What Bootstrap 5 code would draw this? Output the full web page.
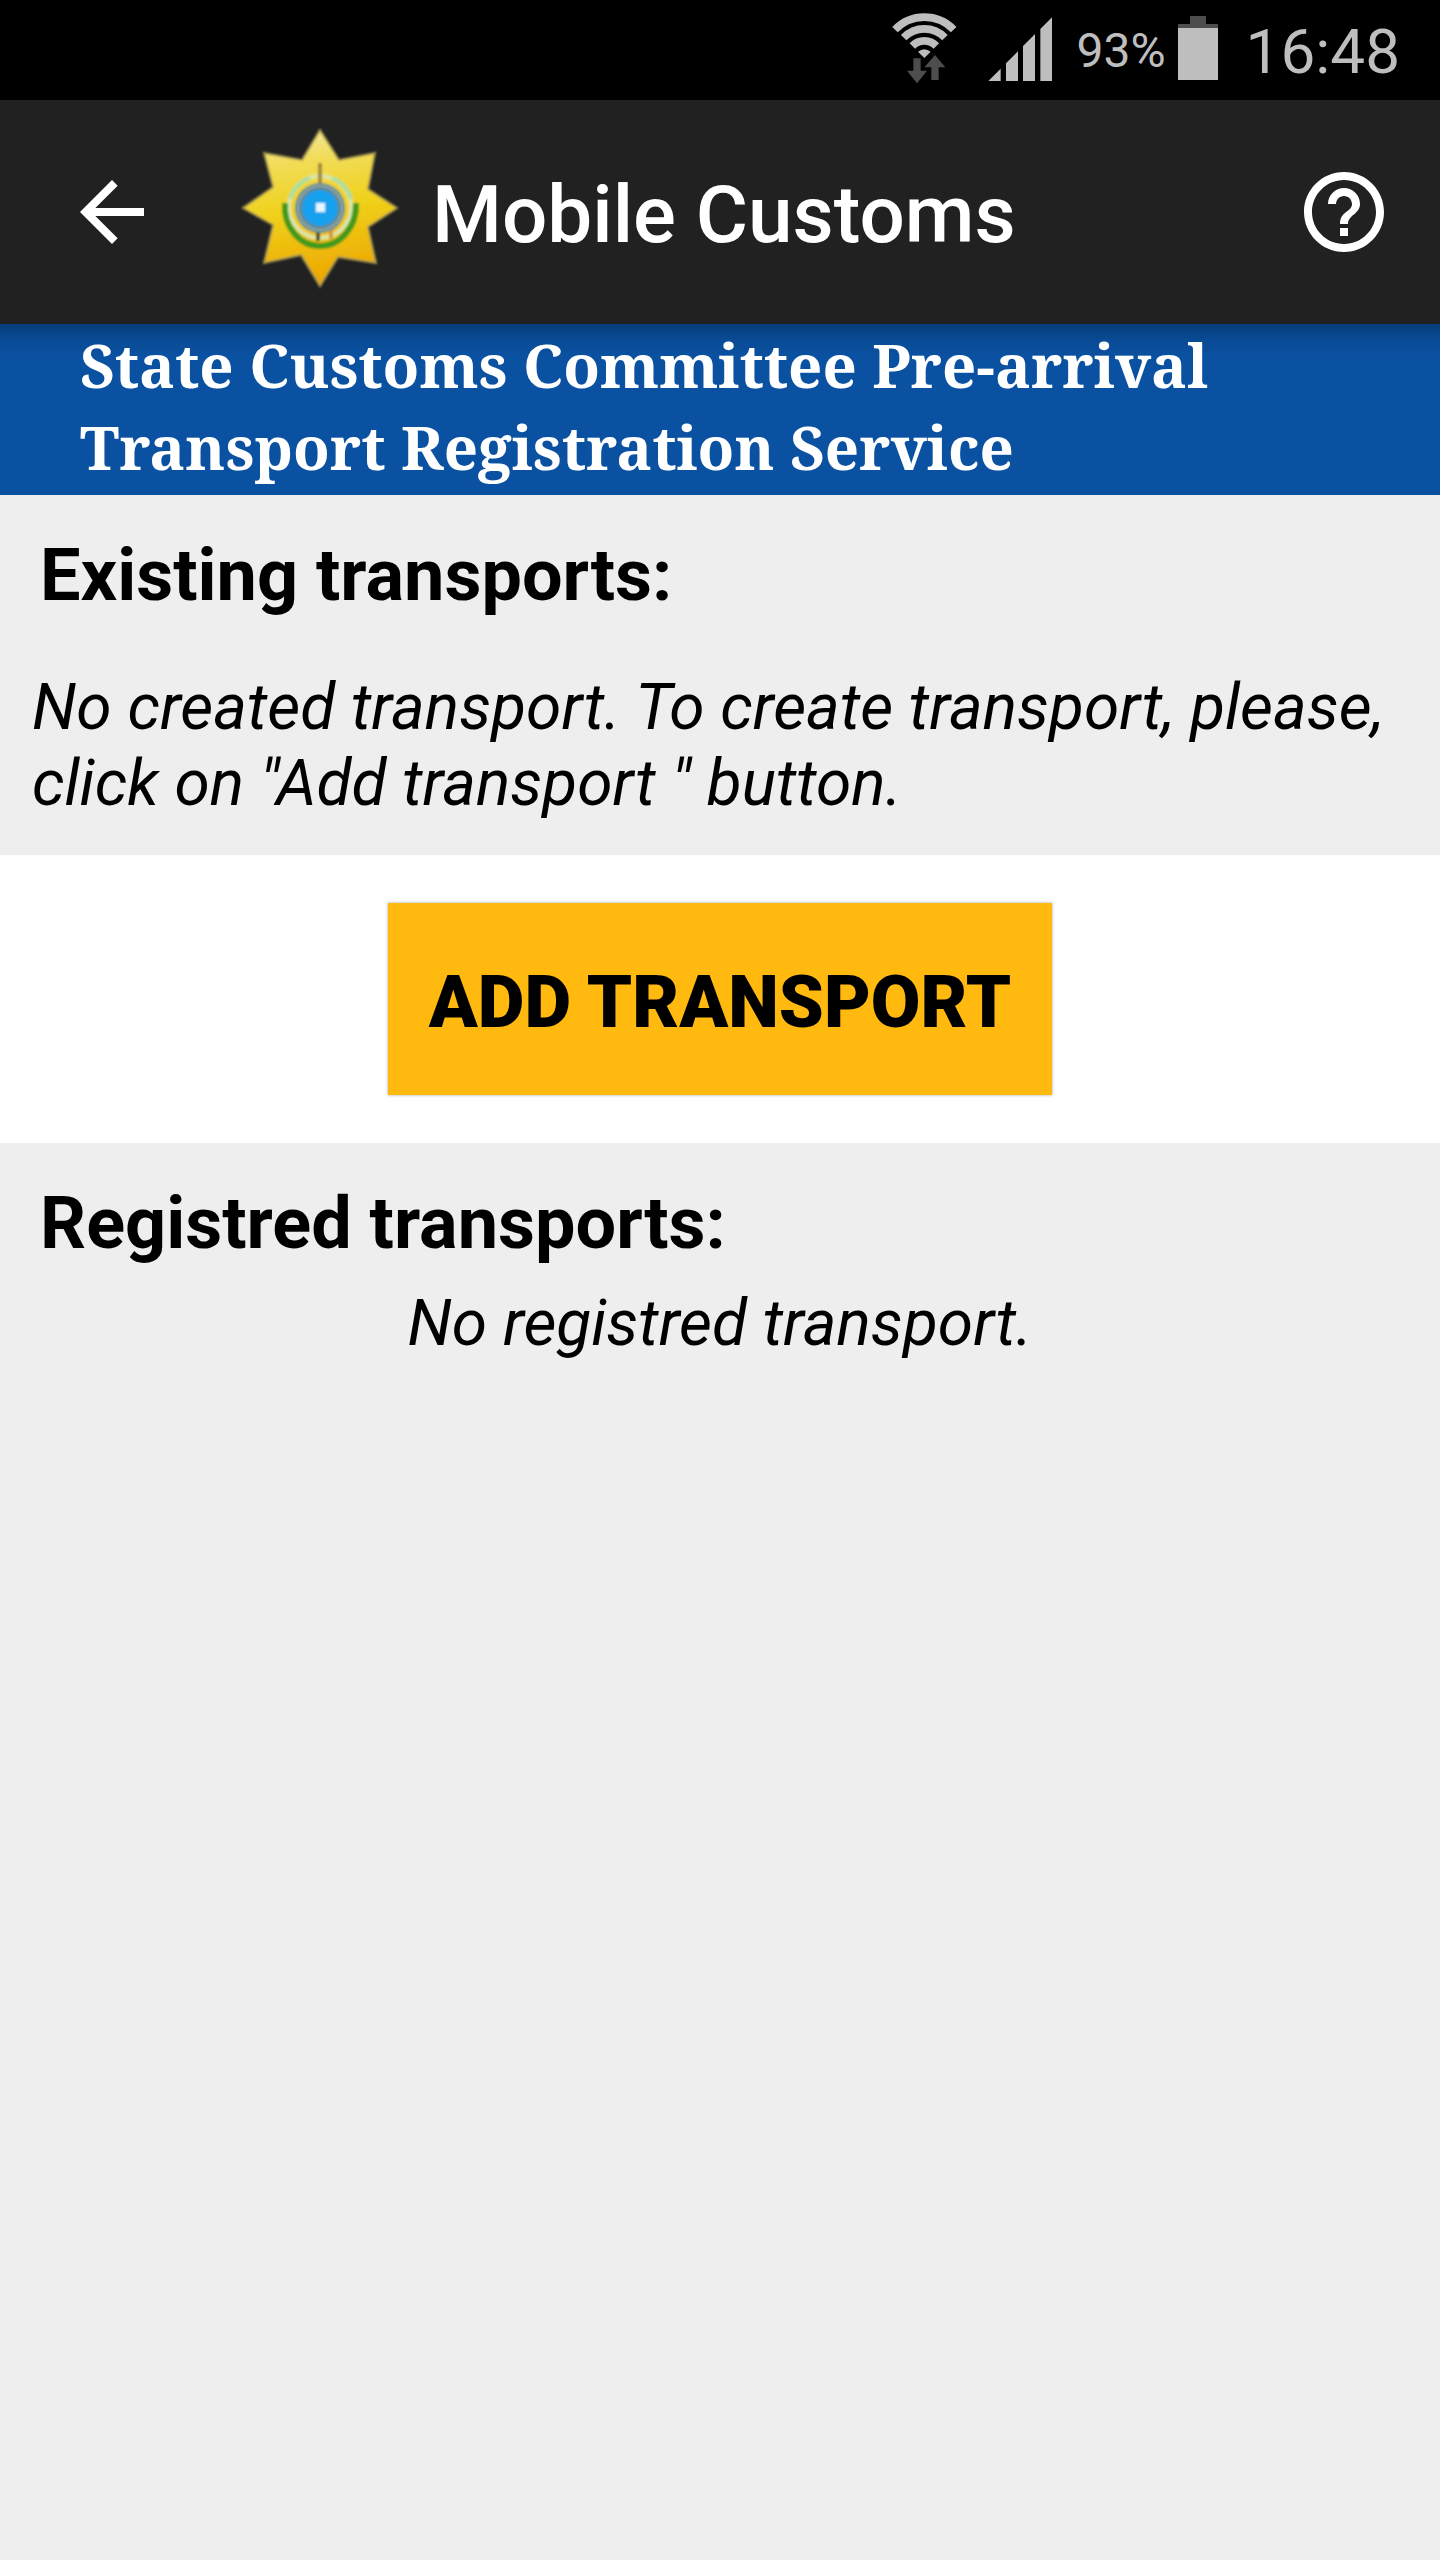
<!DOCTYPE html>
<html lang="en">
<head>
<meta charset="utf-8">
<meta name="viewport" content="width=device-width, initial-scale=1">
<title>Mobile Customs</title>
<link href="https://cdn.jsdelivr.net/npm/bootstrap@5.3.0/dist/css/bootstrap.min.css" rel="stylesheet">
<style>
  body { font-family: Roboto, "Noto Sans", sans-serif; background: #eee; color: #000; }
  svg { display: block; flex: none; }
  .status-bar { height: 100px; padding-right: 40px; background: #000; color: #bebebe; }
  .status-level { font-size: 48px; line-height: 56px; padding: 2px 12px 0 24px; }
  .status-clock { font-size: 62px; line-height: 76px; padding: 4px 0 0 28px; }
  .app-bar { height: 224px; padding: 0 48px 0 64px; background: #212121; color: #fff; }
  .app-title { font-size: 80px; line-height: 96px; font-weight: 500; padding: 6px 0 0 28px; }
  .app-logo { margin-left: 76px; }
  .service-banner {
    padding: 0 80px 7px;
    background: linear-gradient(rgba(0,0,0,.25), rgba(0,0,0,.08) 16px, transparent 32px) #0a51a1;
    color: #fff;
    font: bold 60px/82px "Noto Serif", "DejaVu Serif", serif;
  }
  .section-title { font-size: 72px; line-height: 84px; font-weight: 700; padding: 0 8px; }
  .empty-note { font-size: 64px; line-height: 76px; font-style: italic; }
  .transport-section { padding: 39px 32px 33px; }
  .add-area { padding: 48px 0; }
  .add-btn {
    --bs-btn-bg: #ffb90f; --bs-btn-color: #000; --bs-btn-hover-bg: #f0ab00;
    --bs-btn-font-size: 72px; --bs-btn-line-height: 84px; --bs-btn-font-weight: 900;
    --bs-btn-padding-x: 41px;
    padding-top: 58px; padding-bottom: 50px;
    box-shadow: 0 0 3px rgba(0,0,0,.35);
  }
</style>
</head>
<body>
<div class="status-bar d-flex align-items-center justify-content-end">
  <svg width="68" height="100" viewBox="90 0 204 300" aria-label="Wi-Fi" role="img">
    <g fill="none" stroke="#bebebe" stroke-width="23">
      <path d="M105 89A122 122 0 0 1 281 89"/>
      <path d="M131 113A86 86 0 0 1 255 113"/>
      <path d="M157 138A50 50 0 0 1 229 138"/>
    </g>
    <path fill="#bebebe" d="M193 174L174 155Q193 140 212 155Z"/>
    <path fill="#4d4d4d" d="M160 175H182V212H201L171 250L141 212H160ZM214 240V202H193L225 165L256 202H236V240Z"/>
  </svg>
  <svg class="ms-4" width="70" height="100" viewBox="366 0 210 300" aria-label="Signal" role="img">
    <path fill="#bebebe" d="M385 243L422 206V243ZM438 243V190L474 154V243ZM489 243V138L525 102V243ZM541 243V87L576 52V243Z"/>
  </svg>
  <span class="status-level">93%</span>
  <svg width="40" height="100" viewBox="111 0 120 300" aria-label="Battery" role="img">
    <path fill="#4d4d4d" d="M147 48H195V72H231V84H111V72H147Z"/><path fill="#bebebe" d="M111 84H231V240H111Z"/>
  </svg>
  <span class="status-clock">16:48</span>
</div>
<header class="app-bar d-flex align-items-center">
  <a href="#" aria-label="Back"><svg width="96" height="96" viewBox="0 0 24 24" fill="#fff"><path d="M20 11H7.83l5.59-5.59L12 4l-8 8 8 8 1.41-1.41L7.83 13H20v-2z"/></svg></a>
  <svg class="app-logo" width="168" height="168" viewBox="6 13 168 168" aria-hidden="true">
    <defs>
      <linearGradient id="gold" x1="0" y1="0" x2="0.15" y2="1">
        <stop offset="0" stop-color="#f3e9b0"/><stop offset=".25" stop-color="#f2dc58"/>
        <stop offset=".55" stop-color="#f0d21c"/><stop offset="1" stop-color="#eda900"/>
      </linearGradient>
      <filter id="soften" x="-10%" y="-10%" width="120%" height="120%"><feGaussianBlur stdDeviation="1"/></filter>
    </defs>
    <g filter="url(#soften)">
      <path fill="url(#gold)" stroke="#a5974d" stroke-width="2" d="M90 15L109 45L145 38L138 74L167 93L138 112L146 148L108 142L90 171L71 140L34 148L43 110L13 93L43 72L34 38L72 45Z"/>
      <circle cx="90" cy="92" r="31" fill="none" stroke="#dbe6a8" stroke-width="4"/>
      <path d="M60 84A31 32 0 0 1 80 63M102 63A31 32 0 0 1 121 84" fill="none" stroke="#a9dfa0" stroke-width="4"/>
      <path d="M55 88C53 112 70 131 90 131S127 112 126 88" fill="none" stroke="#3f9a1c" stroke-width="6"/>
      <path d="M90 48V70" stroke="#a08a45" stroke-width="4"/>
      <path d="M88 114V126" stroke="#4b4a20" stroke-width="4"/><path d="M101 114V124" stroke="#d69a35" stroke-width="4"/>
      <circle cx="90" cy="93" r="25" fill="#5e8794"/>
      <circle cx="90" cy="93" r="22" fill="none" stroke="#92a9a5" stroke-width="2"/>
      <circle cx="90" cy="93" r="18" fill="#12a0ee"/>
      <path fill="#e5f8ff" d="M86 88H95V97H86Z"/>
    </g>
  </svg>
  <h1 class="app-title mb-0">Mobile Customs</h1>
  <a href="#" class="ms-auto" aria-label="Help"><svg width="96" height="96" viewBox="0 0 24 24" fill="#fff"><path d="M11 18h2v-2h-2v2zm1-16C6.48 2 2 6.48 2 12s4.480 10 10 10 10-4.480 10-10S17.520 2 12 2zm0 18c-4.410 0-8-3.590-8-8s3.590-8 8-8 8 3.590 8 8-3.590 8-8 8zm0-14c-2.210 0-4 1.790-4 4h2c0-1.100.9-2 2-2s2 .9 2 2c0 2-3 1.750-3 5h2c0-2.250 3-2.500 3-5 0-2.210-1.790-4-4-4z"/></svg></a>
</header>
<main>
  <h2 class="service-banner mb-0">State Customs Committee Pre-arrival Transport Registration Service</h2>
  <section class="transport-section">
    <h3 class="section-title mb-0">Existing transports:</h3>
    <p class="empty-note mt-5 pt-1 mb-0">No created transport. To create transport, please, click on "Add transport " button.</p>
  </section>
  <div class="add-area bg-white text-center d-flex justify-content-center">
    <button type="button" class="btn add-btn border-0 rounded-0">ADD TRANSPORT</button>
  </div>
  <section class="transport-section">
    <h3 class="section-title mb-0">Registred transports:</h3>
    <p class="empty-note text-center mt-3 pt-1 mb-0">No registred transport.</p>
  </section>
</main>
<script src="https://cdn.jsdelivr.net/npm/bootstrap@5.3.0/dist/js/bootstrap.bundle.min.js"></script>
</body>
</html>
